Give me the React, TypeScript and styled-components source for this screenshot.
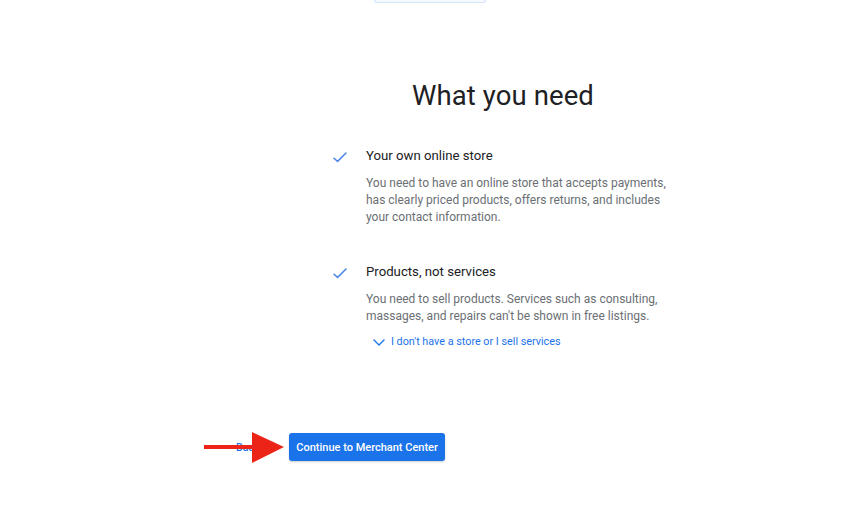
import styled, { createGlobalStyle } from 'styled-components';

const GlobalStyle = createGlobalStyle`
  html, body {
    margin: 0;
    padding: 0;
    background: #ffffff;
    font-family: Roboto, "Liberation Sans", Arial, sans-serif;
    color: #202124;
  }
`;

const Page = styled.div`
  position: relative;
  width: 860px;
  height: 510px;
  overflow: hidden;
  display: flex;
  flex-direction: column;
`;

const TopTab = styled.div`
  align-self: center;
  width: 110px;
  height: 2px;
  background: #f6f9fe;
  border: 1px solid #d2e3fc;
  border-top: none;
  border-radius: 0 0 4px 4px;
`;

const Main = styled.main`
  display: flex;
  flex-direction: column;
  align-items: center;
  padding-left: 146px;
`;

const Title = styled.h1`
  margin: 73px 0 0;
  font-size: 27.5px;
  font-weight: 400;
  line-height: 40px;
  color: #202124;
  letter-spacing: 0.1px;
`;

const List = styled.ul`
  list-style: none;
  margin: 30px 0 0;
  padding: 0;
  width: 340px;
  display: flex;
  flex-direction: column;
  gap: 36px;
`;

const Item = styled.li`
  display: grid;
  grid-template-columns: 33px 1fr;
`;

const CheckWrap = styled.div`
  padding-top: 2px;
`;

const ItemTitle = styled.div`
  font-size: 13.2px;
  line-height: 20px;
  color: #202124;
`;

const ItemText = styled.p`
  margin: 9px 0 0;
  font-size: 12px;
  line-height: 17px;
  color: #6b6f74;
`;

const MoreLink = styled.a`
  display: flex;
  align-items: center;
  gap: 6px;
  margin: 10px 0 0 7px;
  font-size: 10.8px;
  line-height: 14px;
  color: #1a73e8;
  text-decoration: none;
`;

const Footer = styled.div`
  display: flex;
  align-items: center;
  gap: 30px;
  margin: 84px 0 0 236px;
`;

const BackLink = styled.a`
  font-size: 10.5px;
  font-weight: 500;
  color: #1a73e8;
`;

const PrimaryButton = styled.button`
  height: 28px;
  padding: 0 7px;
  border: none;
  border-radius: 3px;
  background: #1a73e8;
  color: #ffffff;
  font-family: Roboto, "Liberation Sans", Arial, sans-serif;
  font-size: 11px;
  font-weight: 500;
  box-shadow: 0 1px 2px rgba(60, 64, 67, 0.25);
`;

const Arrow = styled.svg`
  position: absolute;
  left: 203px;
  top: 431px;
`;

const Check = () => (
  <svg width="14" height="11" viewBox="0 0 14 11">
    <path d="M1 6.2 L4.6 9.4 L13 1" fill="none" stroke="#4a86e8" strokeWidth="1.5" strokeLinecap="round" strokeLinejoin="round" />
  </svg>
);

const Chevron = () => (
  <svg width="12" height="7" viewBox="0 0 12 7">
    <path d="M1 1 L6 6 L11 1" fill="none" stroke="#1a73e8" strokeWidth="1.4" strokeLinecap="round" strokeLinejoin="round" />
  </svg>
);

export default function App() {
  return (
    <>
      <GlobalStyle />
      <Page>
        <TopTab />
        <Main>
          <Title>What you need</Title>
          <List>
            <Item>
              <CheckWrap><Check /></CheckWrap>
              <div>
                <ItemTitle>Your own online store</ItemTitle>
                <ItemText>
                  You need to have an online store that accepts payments, has clearly priced products, offers returns, and includes your contact information.
                </ItemText>
              </div>
            </Item>
            <Item>
              <CheckWrap><Check /></CheckWrap>
              <div>
                <ItemTitle>Products, not services</ItemTitle>
                <ItemText>
                  You need to sell products. Services such as consulting, massages, and repairs can't be shown in free listings.
                </ItemText>
                <MoreLink href="#"><Chevron />I don't have a store or I sell services</MoreLink>
              </div>
            </Item>
          </List>
        </Main>
        <Footer>
          <BackLink>Back</BackLink>
          <PrimaryButton>Continue to Merchant Center</PrimaryButton>
        </Footer>
        <Arrow width="82" height="33" viewBox="0 0 82 33">
          <rect x="1" y="14" width="52" height="4" fill="#ec2418" />
          <polygon points="49,1 81,16 49,32" fill="#ec2418" />
        </Arrow>
      </Page>
    </>
  );
}
